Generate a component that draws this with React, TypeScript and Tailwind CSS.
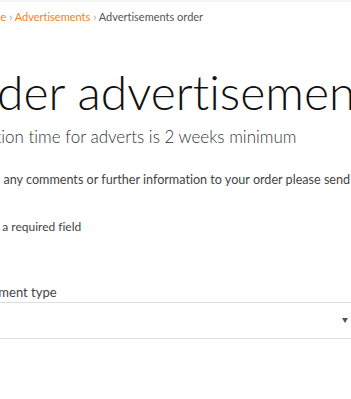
import React from "react";

export default function App() {
  return (
    <div className="w-[351px] h-[399px] overflow-hidden bg-white [font-variant-ligatures:none]" style={{ fontFamily: "Lato, 'Liberation Sans', sans-serif" }}>
      <div className="h-[2px] bg-[#f4f4f4]" />
      <nav className="mt-[8px] -ml-[23px] whitespace-nowrap text-[11px] leading-[14px] text-[#555]">
        <span className="text-[#f58220]">Home</span>
        <span className="text-[#999]"> › </span>
        <span className="text-[#f58220]">Advertisements</span>
        <span className="text-[#999]"> › </span>
        <span>Advertisements order</span>
      </nav>
      <div className="-ml-[56px] w-[417px] flex flex-col whitespace-nowrap">
        <h1 className="mt-[40px] text-[48px] leading-[56px] font-light text-[#111]">Order advertisement</h1>
        <p className="mt-[6px] text-[17px] leading-[22px] font-light text-[#333]">Production time for adverts is 2 weeks minimum</p>
        <p className="mt-[24px] -ml-[4px] text-[12.6px] leading-[16px] text-[#444]">If you have any comments or further information to your order please send them to us</p>
        <p className="mt-[31px] text-[12px] leading-[16px] text-[#444]">* Indicates a required field</p>
        <label className="mt-[49px] text-[13px] leading-[16px] text-[#444]">Advertisement type</label>
        <div className="mt-[2px] h-[37px] border-y border-[#dedede] flex items-center justify-end pr-[13px]">
          <svg width="6" height="5" viewBox="0 0 6 5"><polygon points="0,0 6,0 3,5" fill="#555" /></svg>
        </div>
      </div>
    </div>
  );
}
